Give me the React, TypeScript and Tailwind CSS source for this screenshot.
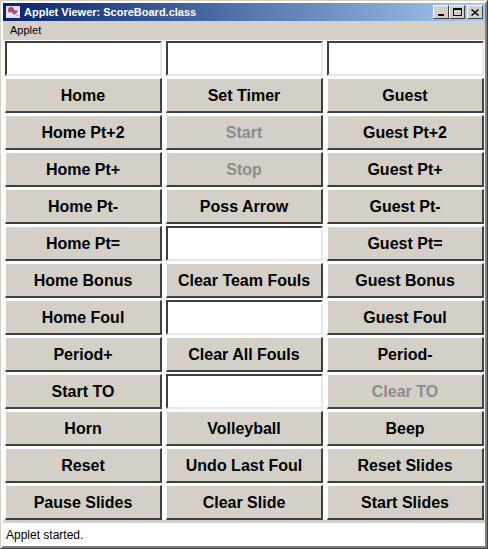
import React from "react";

type Cell = { kind: "btn"; label: string; disabled?: boolean } | { kind: "field" };

const b = (label: string, disabled = false): Cell => ({ kind: "btn", label, disabled });
const f: Cell = { kind: "field" };

const CELLS: Cell[] = [
  f, f, f,
  b("Home"), b("Set Timer"), b("Guest"),
  b("Home Pt+2"), b("Start", true), b("Guest Pt+2"),
  b("Home Pt+"), b("Stop", true), b("Guest Pt+"),
  b("Home Pt-"), b("Poss Arrow"), b("Guest Pt-"),
  b("Home Pt="), f, b("Guest Pt="),
  b("Home Bonus"), b("Clear Team Fouls"), b("Guest Bonus"),
  b("Home Foul"), f, b("Guest Foul"),
  b("Period+"), b("Clear All Fouls"), b("Period-"),
  b("Start TO"), f, b("Clear TO", true),
  b("Horn"), b("Volleyball"), b("Beep"),
  b("Reset"), b("Undo Last Foul"), b("Reset Slides"),
  b("Pause Slides"), b("Clear Slide"), b("Start Slides"),
];

function TitleButton({ children }: { children: React.ReactNode }) {
  return (
    <div className="w-[16px] h-[14px] bg-[#d4d0c8] border-t border-l border-t-white border-l-white border-b border-r border-b-[#404040] border-r-[#404040] flex items-center justify-center">
      {children}
    </div>
  );
}

function AppIcon() {
  return (
    <svg width="16" height="16" viewBox="0 0 16 16">
      <rect x="1" y="2" width="14" height="12" fill="#e8d8e8" />
      <circle cx="6" cy="6" r="3" fill="#c04070" />
      <circle cx="10" cy="9" r="3" fill="#8060a0" />
      <path d="M2 12 L6 9 L9 12 L14 8" stroke="#ffffff" strokeWidth="1.5" fill="none" />
    </svg>
  );
}

export default function App() {
  return (
    <div
      className="w-[488px] h-[549px] bg-[#d4d0c8] border border-t-[#d4d0c8] border-l-[#d4d0c8] border-r-[#404040] border-b-[#404040] flex flex-col"
      style={{ fontFamily: '"Liberation Sans", Arial, sans-serif' }}
    >
      <div className="border-2 border-t-white border-l-white border-r-[#808080] border-b-[#808080] flex flex-col flex-1 min-h-0">
        {/* title bar */}
        <div className="h-[18px] flex items-center bg-gradient-to-r from-[#0a246a] to-[#a6caf0] pl-[2px] pr-[2px] gap-[3px]">
          <AppIcon />
          <span className="text-white font-bold text-[11px] leading-none flex-1">Applet Viewer: ScoreBoard.class</span>
          <div className="flex items-center">
            <TitleButton>
              <div className="w-[6px] h-[2px] bg-black mt-[6px]" />
            </TitleButton>
            <TitleButton>
              <div className="w-[9px] h-[8px] border border-black border-t-2" />
            </TitleButton>
            <div className="w-[2px]" />
            <TitleButton>
              <svg width="8" height="7" viewBox="0 0 8 7">
                <path d="M0.5 0.5 L7.5 6.5 M7.5 0.5 L0.5 6.5" stroke="black" strokeWidth="1.5" />
              </svg>
            </TitleButton>
          </div>
        </div>

        {/* menu bar */}
        <div className="h-[19px] flex items-center pl-[7px] text-[11px] text-black">Applet</div>

        {/* grid */}
        <div className="grid grid-cols-[157px_157px_157px] auto-rows-[35px] gap-x-[4px] gap-y-[2px] pl-[2px] pt-[1px] bg-white">
          {CELLS.map((c, i) =>
            c.kind === "field" ? (
              <div
                key={i}
                className="bg-white border-2 border-t-[#404040] border-l-[#404040] border-b-[#e8e8e8] border-r-[#e8e8e8]"
              />
            ) : (
              <div
                key={i}
                className={`bg-[#d4d0c8] border-t border-l border-t-white border-l-white border-b-2 border-r-2 border-b-[#404040] border-r-[#404040] flex items-center justify-center pt-[2px] text-[16px] font-bold ${
                  c.disabled ? "text-[#8c8c8c]" : "text-black"
                }`}
              >
                {c.label}
              </div>
            )
          )}
        </div>

        {/* status bar */}
        <div className="flex-1 bg-white mt-[2px] flex items-center pl-[3px] text-[12px] text-black border-t border-[#d4d0c8]">
          Applet started.
        </div>
      </div>
    </div>
  );
}
